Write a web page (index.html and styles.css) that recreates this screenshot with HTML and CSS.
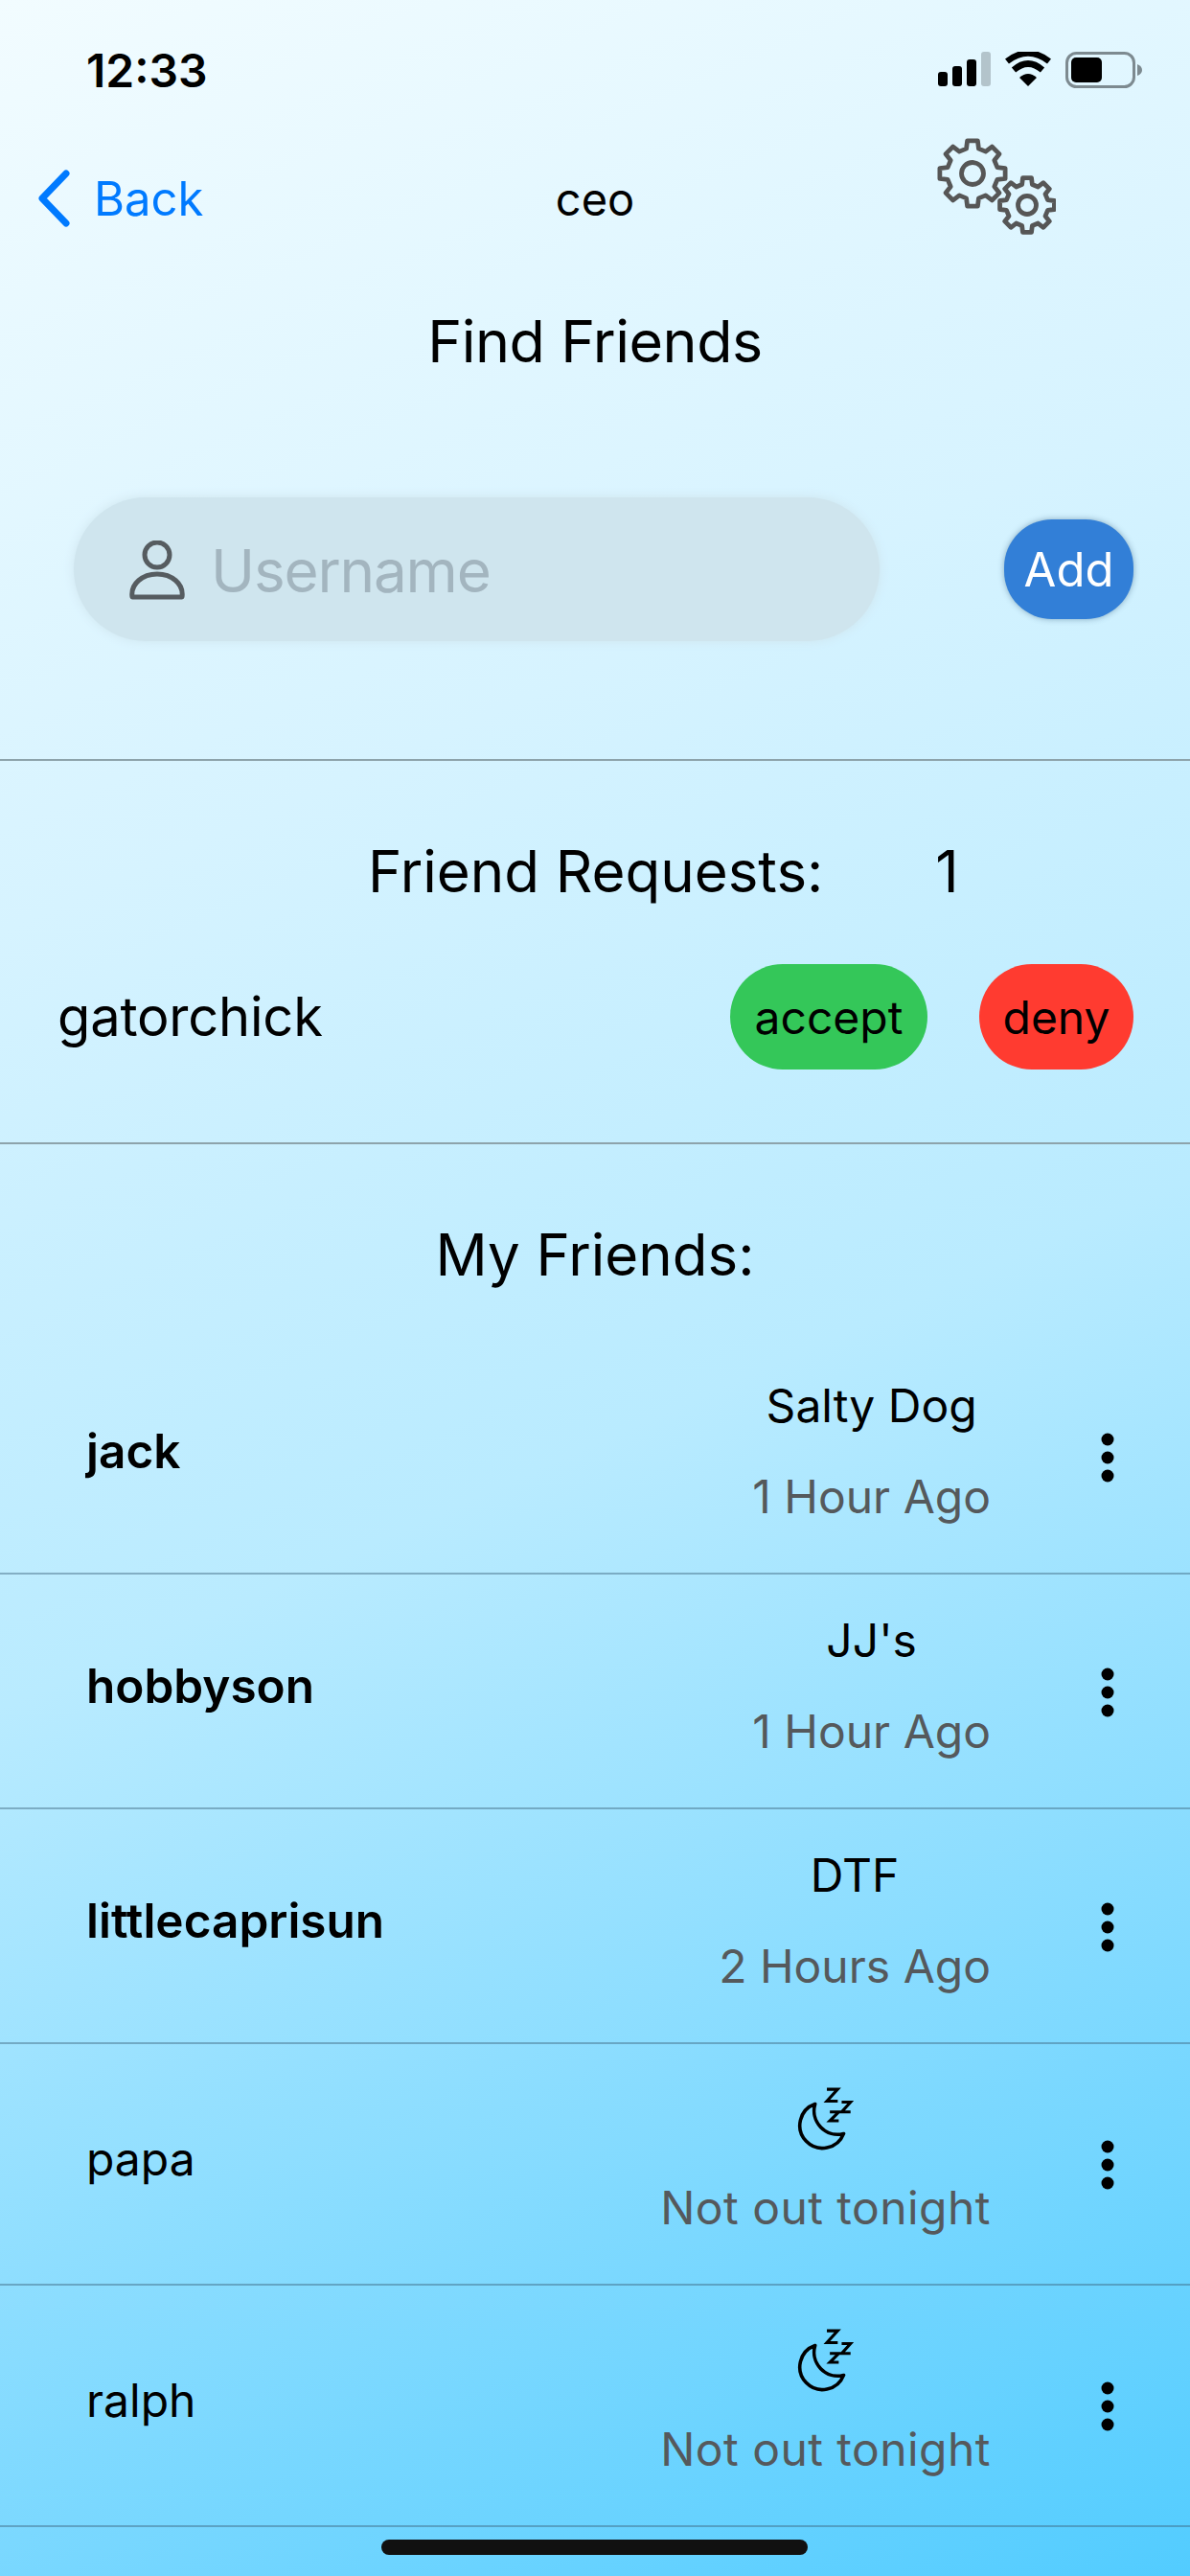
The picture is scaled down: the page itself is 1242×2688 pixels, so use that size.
FILE: index.html
```html
<!DOCTYPE html>
<html lang="en">
<head>
<meta charset="utf-8">
<title>Find Friends</title>
<link rel="stylesheet" href="styles.css">
</head>
<body>
<svg class="defs" width="0" height="0" aria-hidden="true">
  <defs>
    <symbol id="moon" viewBox="0 0 60 70">
      <path class="moon-shape" d="M19 20A23 23 0 1 0 48 50A24 24 0 0 1 19 20Z"/>
      <path class="moon-z" d="M31 5H42L31 17H42M46 18H55L46 28H55M34 28H43L34 37H43"/>
    </symbol>
    <symbol id="dots" viewBox="0 0 20 52">
      <circle cx="10" cy="7" r="6.5"/><circle cx="10" cy="26" r="6.5"/><circle cx="10" cy="45" r="6.5"/>
    </symbol>
    <polygon id="gear" points="-8.95,-35.9 -7.5,-47.4 7.5,-47.4 8.95,-35.9 19.06,-31.71 28.21,-38.82 38.82,-28.21 31.71,-19.06 35.9,-8.95 47.4,-7.5 47.4,7.5 35.9,8.95 31.71,19.06 38.82,28.21 28.21,38.82 19.06,31.71 8.95,35.9 7.5,47.4 -7.5,47.4 -8.95,35.9 -19.06,31.71 -28.21,38.82 -38.82,28.21 -31.71,19.06 -35.9,8.95 -47.4,7.5 -47.4,-7.5 -35.9,-8.95 -31.71,-19.06 -38.82,-28.21 -28.21,-38.82 -19.06,-31.71"/>
  </defs>
</svg>
<main class="screen">
  <header class="status">
    <span class="time">12:33</span>
    <div class="status-icons">
      <svg class="signal" width="55" height="36" viewBox="0 0 55 36">
        <rect x="0" y="21" width="10" height="15" rx="3"/><rect x="15" y="15" width="10" height="21" rx="3"/><rect x="30" y="8" width="10" height="28" rx="3"/><rect class="signal-off" x="45" y="0" width="10" height="36" rx="3"/>
      </svg>
      <svg class="wifi" width="48" height="37" viewBox="0 0 48 37">
        <path class="wifi-fill" d="M24 36L15 27Q24 19 33 27Z"/>
        <path class="wifi-arc" d="M9 19Q24 6 39 19"/>
        <path class="wifi-arc" d="M2 10Q24 -7 46 10"/>
      </svg>
      <svg class="battery" width="80" height="38" viewBox="0 0 80 38">
        <rect class="battery-frame" x="1.5" y="1.5" width="70" height="35" rx="10"/>
        <rect x="6" y="6" width="32" height="26" rx="5"/>
        <path class="battery-tip" d="M75 13Q80 15 80 19Q80 23 75 25Z"/>
      </svg>
    </div>
  </header>
  <nav class="nav">
    <a class="back">
      <svg class="chevron" width="36" height="60" viewBox="0 0 36 60"><path d="M31 4L6 30L31 56"/></svg>
      <span>Back</span>
    </a>
    <span class="nav-title">ceo</span>
    <svg class="gears" width="126" height="104" viewBox="0 0 126 104">
      <use href="#gear" class="gear-line gear-big" transform="translate(39 38) scale(.72)"/>
      <circle class="gear-hole" cx="39" cy="38" r="11.5"/>
      <use href="#gear" class="gear-line gear-small" transform="translate(96 71) scale(.6)"/>
      <circle class="gear-hole" cx="96" cy="71" r="9.5"/>
    </svg>
  </nav>
  <section class="find">
    <h1 class="title">Find Friends</h1>
    <div class="search">
      <div class="field">
        <svg class="person" width="58" height="62" viewBox="0 0 58 62">
          <circle cx="29" cy="15" r="13"/>
          <path d="M3 59C1 45 14 35 29 35C44 35 57 45 55 59Z"/>
        </svg>
        <span class="placeholder">Username</span>
      </div>
      <button class="add">Add</button>
    </div>
  </section>
  <section class="requests">
    <div class="requests-head"><span>Friend Requests:</span><span class="count">1</span></div>
    <div class="request">
      <span class="request-name">gatorchick</span>
      <button class="pill accept">accept</button>
      <button class="pill deny">deny</button>
    </div>
  </section>
  <section class="friends">
    <h2 class="friends-head">My Friends:</h2>
    <div class="row">
      <span class="name strong">jack</span>
      <div class="where"><span class="place">Salty Dog</span><span class="ago">1 Hour Ago</span></div>
      <svg class="dots"><use href="#dots"/></svg>
    </div>
    <div class="row">
      <span class="name strong">hobbyson</span>
      <div class="where"><span class="place">JJ's</span><span class="ago">1 Hour Ago</span></div>
      <svg class="dots"><use href="#dots"/></svg>
    </div>
    <div class="row">
      <span class="name strong">littlecaprisun</span>
      <div class="where"><span class="place">DTF</span><span class="ago">2 Hours Ago</span></div>
      <svg class="dots"><use href="#dots"/></svg>
    </div>
    <div class="row row-out">
      <span class="name">papa</span>
      <div class="where"><svg class="moon"><use href="#moon"/></svg><span class="ago">Not out tonight</span></div>
      <svg class="dots"><use href="#dots"/></svg>
    </div>
    <div class="row row-out">
      <span class="name">ralph</span>
      <div class="where"><svg class="moon"><use href="#moon"/></svg><span class="ago">Not out tonight</span></div>
      <svg class="dots"><use href="#dots"/></svg>
    </div>
  </section>
  <div class="home-bar"></div>
</main>
</body>
</html>
```
FILE: styles.css
```css
* { box-sizing: border-box; }
html, body { margin: 0; padding: 0; }
body { font-family: Inter, "Liberation Sans", sans-serif; color: #000; }
.defs { position: absolute; }
.screen {
  position: relative;
  width: 1242px;
  height: 2688px;
  overflow: hidden;
  background: linear-gradient(156deg, #f2fcff 0%, #d6f3ff 30%, #b9ebff 55%, #7bd8ff 82%, #52ccff 100%);
}
.status { height: 145px; padding: 52px 50px 0 90px; display: flex; justify-content: space-between; align-items: flex-start; }
.time { font-size: 48px; font-weight: 600; line-height: 44px; }
.status-icons { display: flex; align-items: flex-start; gap: 15px; padding-top: 2px; }
.signal rect { fill: #000; }
.signal .signal-off { fill: #b3c4cb; }
.wifi-fill { fill: #000; }
.wifi-arc { fill: none; stroke: #000; stroke-width: 6.5; }
.battery-frame { fill: none; stroke: #7d8a90; stroke-width: 3; }
.battery-tip { fill: #7d8a90; }
.nav { height: 100px; padding-top: 20px; display: grid; grid-template-columns: 1fr auto 1fr; grid-template-rows: 80px; align-items: center; }
.back { display: flex; align-items: center; gap: 24px; margin-top: 4px; padding-left: 38px; color: #007aff; font-size: 49px; }
.chevron path { fill: none; stroke: #007aff; stroke-width: 7; stroke-linecap: round; stroke-linejoin: round; }
.nav-title { margin-top: 4px; font-size: 47px; }
.gears { justify-self: end; margin-right: 140px; margin-bottom: 20px; }
.gear-line, .gear-hole { fill: none; stroke: #565656; }
.gear-line { stroke-linejoin: round; }
.gear-big { stroke-width: 6.6px; }
.gear-small { stroke-width: 8px; }
.gear-hole { stroke-width: 4.8px; }
.find { height: 549px; border-bottom: 2px solid #8da3ab; }
.title { margin: 0; height: 274px; padding-top: 80px; text-align: center; font-size: 61px; font-weight: 400; line-height: 62px; letter-spacing: -.5px; }
.search { display: flex; justify-content: space-between; align-items: center; padding: 0 59px 0 77px; }
.field { width: 841px; height: 150px; padding-left: 58px; display: flex; align-items: center; gap: 27px; border-radius: 75px; background: #cfe5ee; box-shadow: 0 0 12px #cfe5ee; }
.person { margin-top: 2px; }
.person circle, .person path { fill: none; stroke: #565c60; stroke-width: 5; stroke-linejoin: round; }
.placeholder { padding-top: 3px; font-size: 62px; letter-spacing: -1.2px; color: #a3b5bf; }
.add { width: 135px; height: 104px; padding: 0; border: 0; border-radius: 50px; background: #327fd7; color: #fff; font-family: inherit; font-size: 49px; box-shadow: 0 0 6px rgba(40, 80, 110, .45); }
.requests { height: 400px; border-bottom: 2px solid #8da3ab; padding-top: 80px; }
.requests-head { height: 70px; padding-left: 384px; display: flex; font-size: 60px; line-height: 70px; }
.count { margin-left: 117px; }
.request { margin-top: 62px; display: flex; align-items: center; padding: 0 59px 0 60px; }
.request-name { font-size: 56px; letter-spacing: -.2px; margin-right: auto; }
.pill { height: 110px; padding: 0; border: 0; border-radius: 55px; font-family: inherit; font-size: 48px; color: #000; }
.accept { width: 206px; background: #34c759; }
.deny { width: 161px; margin-left: 54px; background: #ff3b30; }
.friends-head { margin: 0; height: 204px; padding-top: 80px; text-align: center; font-size: 60px; font-weight: 400; line-height: 70px; }
.row { height: 245px; padding: 0 76px 8px 90px; display: flex; align-items: center; border-bottom: 2px solid rgba(60, 100, 125, .45); }
.row-out { height: 252px; }
.name { font-size: 48px; margin-right: auto; margin-bottom: 4px; }
.strong { font-size: 49.5px; font-weight: 600; }
.where { display: flex; flex-direction: column; align-items: center; margin-right: 112px; margin-bottom: 3px; }
.row-out .where { margin-top: 18px; margin-bottom: 0; }
.place { font-size: 48px; line-height: 95px; }
.ago { font-size: 48px; line-height: 95px; color: #55595c; }
.row-out .ago { letter-spacing: .45px; }
.moon { width: 62px; height: 72px; margin-bottom: 9px; }
.moon-shape { fill: none; stroke: #000; stroke-width: 3.5; stroke-linejoin: round; }
.moon-z { fill: none; stroke: #000; stroke-width: 3; }
.dots { width: 20px; height: 52px; margin-top: 10px; fill: #000; }
.home-bar { position: absolute; left: 398px; top: 2650px; width: 445px; height: 16px; border-radius: 8px; background: #111; }
```
